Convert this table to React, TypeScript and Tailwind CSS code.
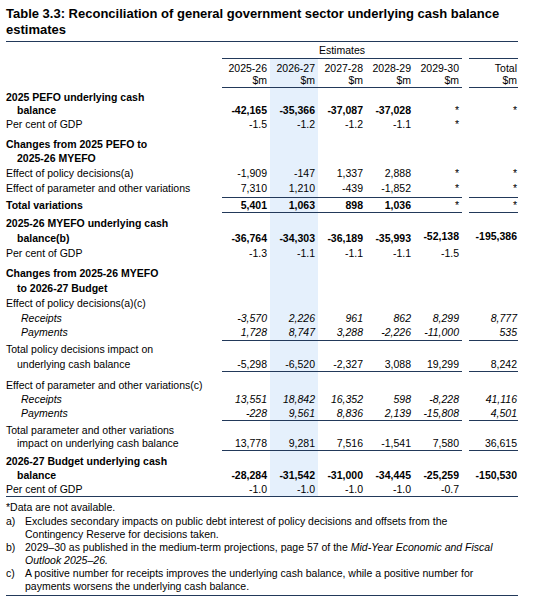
import React from "react";

const COLS = "grid grid-cols-[216px_48px_48px_48px_48px_48px_7px_49px]";
const LINE = "border-b border-[#22395a]";
const HL = "bg-[#e5f0fc]";

type RowProps = {
  label?: React.ReactNode;
  vals?: string[];
  bold?: boolean;
  italic?: boolean;
  indent?: string;
  line?: boolean;
  full?: boolean;
  cls?: string;
  raise?: number[];
};

function Cell({ v, raised }: { v: string; raised?: boolean }) {
  if (v === "*") return <span className="font-normal">*</span>;
  if (raised) return <span className="inline-block -translate-y-[2px]">{v}</span>;
  return <>{v}</>;
}

function Row({ label, vals = [], bold, italic, indent = "", line, full, cls = "leading-[14px]", raise = [] }: RowProps) {
  const font = `${bold ? "font-bold" : ""} ${italic ? "italic" : ""}`;
  const vb = line || full ? LINE : "";
  return (
    <div className={COLS}>
      <div className={`${cls} ${font} ${indent} ${full ? LINE : ""} whitespace-nowrap`}>{label}</div>
      {[0, 1, 2, 3, 4].map((i) => (
        <div key={i} className={`${cls} ${font} text-right pr-[3px] whitespace-nowrap ${i === 1 ? HL : ""} ${vb}`}>
          {vals[i] ? <Cell v={vals[i]} raised={raise.includes(i)} /> : ""}
        </div>
      ))}
      <div className={`${cls} ${full ? LINE : ""}`}></div>
      <div className={`${cls} ${font} text-right pr-[1px] whitespace-nowrap ${vb}`}>
        {vals[5] ? <Cell v={vals[5]} raised={raise.includes(5)} /> : ""}
      </div>
    </div>
  );
}

const IND = "pl-[11px]";
const IND2 = "pl-[15px]";

function Note({ k, children }: { k: string; children: React.ReactNode }) {
  return (
    <div className="flex leading-[13px]">
      <div className="w-[19px] shrink-0">{k}</div>
      <div className="w-[472px]">{children}</div>
    </div>
  );
}

export default function App() {
  return (
    <div className="bg-white w-[536px] h-[599px] text-black font-['Liberation_Sans',Arial,sans-serif] text-[10.5px]">
      <div className="w-[518px] pl-[6px] pt-[6px]">
        <h1 className={`text-[13px] font-bold leading-[16px] pb-[3px] ${LINE}`}>
          Table 3.3: Reconciliation of general government sector underlying cash balance estimates
        </h1>

        {/* header */}
        <div className={COLS}>
          <div></div>
          <div className={`col-span-5 text-center leading-[15px] pt-[1px] ${LINE}`}>Estimates</div>
          <div></div>
          <div className={LINE}></div>
        </div>
        <div className={COLS}>
          <div></div>
          {["2025-26", "2026-27", "2027-28", "2028-29", "2029-30"].map((y, i) => (
            <div key={y} className={`text-right pr-[3px] pt-[3px] leading-[12px] ${i === 1 ? HL : ""}`}>{y}</div>
          ))}
          <div></div>
          <div className="text-right pr-[1px] pt-[3px] leading-[12px]">Total</div>
        </div>
        <div className={COLS}>
          <div></div>
          {[0, 1, 2, 3, 4].map((i) => (
            <div key={i} className={`text-right pr-[3px] leading-[12px] pb-[1px] ${LINE} ${i === 1 ? HL : ""}`}>$m</div>
          ))}
          <div></div>
          <div className={`text-right pr-[1px] leading-[12px] pb-[1px] ${LINE}`}>$m</div>
        </div>

        {/* body */}
        <Row label="2025 PEFO underlying cash" bold cls="pt-[2px] leading-[14px]" />
        <Row label="balance" bold indent={IND} cls="leading-[13px]" vals={["-42,165", "-35,366", "-37,087", "-37,028", "*", "*"]} />
        <Row label="Per cent of GDP" vals={["-1.5", "-1.2", "-1.2", "-1.1", "*", ""]} />
        <Row label="Changes from 2025 PEFO to" bold cls="pt-[6px] leading-[14px]" />
        <Row label="2025-26 MYEFO" bold indent={IND} cls="leading-[15px]" />
        <Row label="Effect of policy decisions(a)" cls="leading-[15px]" vals={["-1,909", "-147", "1,337", "2,888", "*", "*"]} />
        <Row label="Effect of parameter and other variations" line cls="leading-[15px] pb-[1px]" vals={["7,310", "1,210", "-439", "-1,852", "*", "*"]} />
        <Row label="Total variations" bold line cls="leading-[14px]" vals={["5,401", "1,063", "898", "1,036", "*", "*"]} />
        <Row label="2025-26 MYEFO underlying cash" bold cls="pt-[3px] leading-[14px]" />
        <Row label="balance(b)" bold indent={IND} cls="leading-[16px]" raise={[4, 5]} vals={["-36,764", "-34,303", "-36,189", "-35,993", "-52,138", "-195,386"]} />
        <Row label="Per cent of GDP" vals={["-1.3", "-1.1", "-1.1", "-1.1", "-1.5", ""]} />
        <Row label="Changes from 2025-26 MYEFO" bold cls="pt-[6px] leading-[14px]" />
        <Row label="to 2026-27 Budget" bold indent={IND} cls="leading-[16px]" />
        <Row label="Effect of policy decisions(a)(c)" cls="leading-[15px]" />
        <Row label="Receipts" italic indent={IND2} vals={["-3,570", "2,226", "961", "862", "8,299", "8,777"]} />
        <Row label="Payments" italic indent={IND2} line cls="leading-[15px]" vals={["1,728", "8,747", "3,288", "-2,226", "-11,000", "535"]} />
        <Row label="Total policy decisions impact on" cls="pt-[1px] leading-[14px]" />
        <Row label="underlying cash balance" indent={IND} line cls="pt-[1px] leading-[14px]" vals={["-5,298", "-6,520", "-2,327", "3,088", "19,299", "8,242"]} />
        <Row label="Effect of parameter and other variations(c)" cls="pt-[6px] leading-[14px]" />
        <Row label="Receipts" italic indent={IND2} vals={["13,551", "18,842", "16,352", "598", "-8,228", "41,116"]} />
        <Row label="Payments" italic indent={IND2} line vals={["-228", "9,561", "8,836", "2,139", "-15,808", "4,501"]} />
        <Row label="Total parameter and other variations" cls="pt-[2px] leading-[14px]" />
        <Row label="impact on underlying cash balance" indent={IND} line cls="leading-[13px]" vals={["13,778", "9,281", "7,516", "-1,541", "7,580", "36,615"]} />
        <Row label="2026-27 Budget underlying cash" bold cls="pt-[3px] leading-[14px]" />
        <Row label="balance" bold indent={IND} vals={["-28,284", "-31,542", "-31,000", "-34,445", "-25,259", "-150,530"]} />
        <Row label="Per cent of GDP" full vals={["-1.0", "-1.0", "-1.0", "-1.0", "-0.7", ""]} />

        {/* notes */}
        <div className={`pt-[3px] pb-[2px] ${LINE}`}>
          <div className="leading-[14px]">*Data are not available.</div>
          <div className="pt-[1px]">
            <Note k="a)">
              Excludes secondary impacts on public debt interest of policy decisions and offsets from the Contingency Reserve for decisions taken.
            </Note>
          </div>
          <div>
            <Note k="b)">
              2029–30 as published in the medium-term projections, page 57 of the{" "}
              <i>Mid-Year Economic and Fiscal Outlook 2025–26.</i>
            </Note>
          </div>
          <div>
            <Note k="c)">
              A positive number for receipts improves the underlying cash balance, while a positive number for payments worsens the underlying cash balance.
            </Note>
          </div>
        </div>
      </div>
    </div>
  );
}
